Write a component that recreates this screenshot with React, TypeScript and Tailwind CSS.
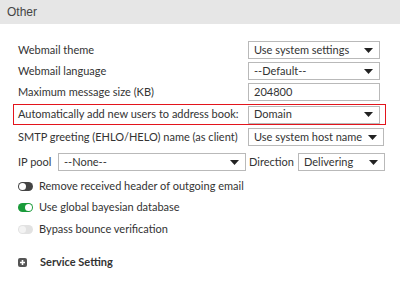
import React from 'react';

function Select({ value, w }: { value: string; w: string }) {
  return (
    <div className={`${w} h-[18px] border border-solid border-[#b9b9b9] bg-white flex items-center justify-between pl-[5px] pr-[6px] text-[#333]`}>
      <span className="whitespace-nowrap">{value}</span>
      <svg width="9" height="5" viewBox="0 0 9 5"><path d="M0 0h9L4.5 5z" fill="#222" /></svg>
    </div>
  );
}

function Toggle({ state }: { state: 'off' | 'on' | 'disabled' }) {
  const track = state === 'on' ? 'bg-[#1a9b3a]' : state === 'off' ? 'bg-[#444]' : 'bg-[#e2e2e2]';
  const knobSide = state === 'on' ? 'justify-end' : 'justify-start';
  const knob = state === 'disabled' ? 'bg-[#f3f3f3]' : 'bg-white';
  return (
    <div className={`w-[15px] h-[9px] rounded-full ${track} flex items-center ${knobSide} px-[1px] shrink-0`}>
      <div className={`w-[7px] h-[7px] rounded-full ${knob}`} />
    </div>
  );
}

export default function App() {
  const font = { fontFamily: 'Lato, "Liberation Sans", sans-serif' };
  return (
    <div className="w-[400px] h-[287px] bg-white overflow-hidden" style={font}>
      <div className="h-[24px] bg-[#e6e6e6] flex items-center px-[7px] text-[12px] text-[#444]" style={{ fontFamily: '"Liberation Sans", Arial, sans-serif' }}>
        Other
      </div>
      <div className="pl-[13px] pt-[17px] text-[11px] text-[#333]">
        <div className="flex flex-col gap-[3px]">
          <div className="flex items-center pl-[5px]">
            <span className="w-[230px]">Webmail theme</span>
            <Select value="Use system settings" w="w-[132px]" />
          </div>
          <div className="flex items-center pl-[5px]">
            <span className="w-[230px]">Webmail language</span>
            <Select value="--Default--" w="w-[132px]" />
          </div>
          <div className="flex items-center pl-[5px]">
            <span className="w-[230px]">Maximum message size (KB)</span>
            <div className="w-[132px] h-[18px] border border-solid border-[#b9b9b9] bg-white flex items-center pl-[5px]">204800</div>
          </div>
          <div className="w-[373px] h-[21px] border border-solid border-[#e3141c] flex items-center pl-[4px]">
            <span className="w-[230px] whitespace-nowrap">Automatically add new users to address book:</span>
            <Select value="Domain" w="w-[132px]" />
          </div>
          <div className="flex items-center pl-[5px]">
            <span className="w-[230px] whitespace-nowrap">SMTP greeting (EHLO/HELO) name (as client)</span>
            <Select value="Use system host name" w="w-[136px]" />
          </div>
          <div className="flex items-center pl-[5px] mt-[4px]">
            <span className="w-[40px] whitespace-nowrap">IP pool</span>
            <Select value="--None--" w="w-[188px]" />
            <span className="ml-[3px] w-[49px] whitespace-nowrap">Direction</span>
            <Select value="Delivering" w="w-[87px]" />
          </div>
        </div>
        <div className="flex flex-col gap-[5.5px] pl-[5px] mt-[7px]">
          <div className="flex items-center gap-[6px] h-[16px]">
            <Toggle state="off" />
            <span>Remove received header of outgoing email</span>
          </div>
          <div className="flex items-center gap-[6px] h-[16px]">
            <Toggle state="on" />
            <span>Use global bayesian database</span>
          </div>
          <div className="flex items-center gap-[6px] h-[16px]">
            <Toggle state="disabled" />
            <span>Bypass bounce verification</span>
          </div>
        </div>
        <div className="flex items-center pl-[5px] mt-[17px] h-[16px]">
          <div className="w-[9px] h-[9px] rounded-[2px] bg-[#555] flex items-center justify-center">
            <svg width="7" height="7" viewBox="0 0 7 7"><path d="M3.5 1v5M1 3.5h5" stroke="#fff" strokeWidth="1.6" /></svg>
          </div>
          <span className="ml-[13px] font-bold">Service Setting</span>
        </div>
      </div>
      <div className="mt-[19px] h-[1px] bg-[#e3e3e3]" />
    </div>
  );
}
